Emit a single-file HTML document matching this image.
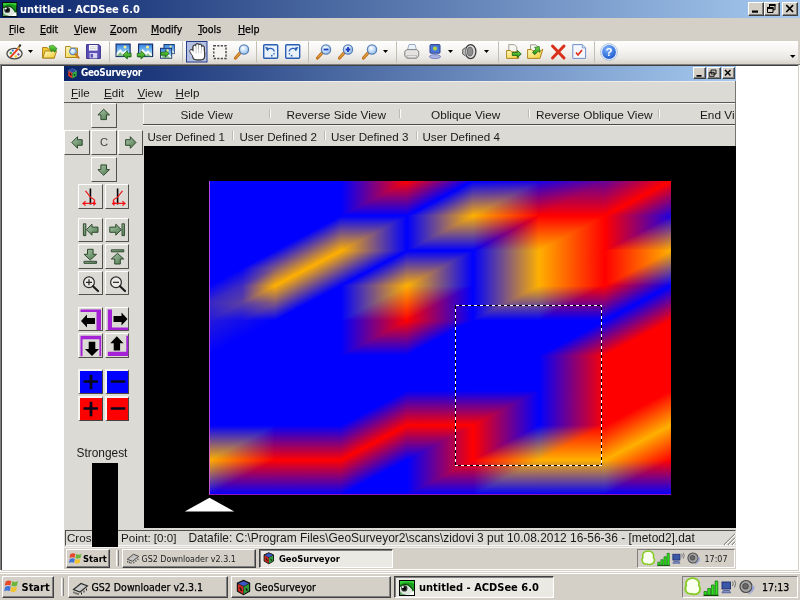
<!DOCTYPE html>
<html><head><meta charset="utf-8"><title>untitled - ACDSee 6.0</title>
<style>
html,body{margin:0;padding:0}
body{width:800px;height:600px;overflow:hidden;position:relative;background:#fff;font-family:"Liberation Sans",sans-serif;font-size:11px;color:#000}
div,span,i,b,u,svg{box-sizing:border-box}
.a,.t,.tb,.ti,.ar,.btn,.cb,.sep,.ic,.tk,.vs,.tray{position:absolute;display:block}
svg{position:absolute;display:block;overflow:visible}
#heat i{position:absolute;display:block;background-blend-mode:screen}
/* Tahoma-like text */
.t{font-family:"DejaVu Sans Condensed","Liberation Sans",sans-serif;font-size:10.5px;line-height:13px;white-space:nowrap;color:#000;-webkit-text-stroke:.25px #000}
.tb{font-family:"DejaVu Sans Condensed","Liberation Sans",sans-serif;font-weight:bold;font-size:10.8px;line-height:13px;white-space:nowrap;color:#000}
/* Arial-like text inside GeoSurveyor */
.ar{font-family:"Liberation Sans",sans-serif;font-size:11.6px;line-height:14px;white-space:nowrap;color:#1a1a1a}
u{text-decoration:underline;text-underline-offset:1px}
.cb{background:#d4d0c8;border:1px solid;border-color:#fff #404040 #404040 #fff;box-shadow:inset -1px -1px 0 #808080}
.btn{background:#dcdad5;border-style:solid;border-width:1px 1.5px 1.5px 1px;border-color:#fff #55524c #55524c #fff}
.sep{width:3px;background:linear-gradient(90deg,#fff 34%,#d4d0c8 34% 67%,#808080 67%)}
.vs{width:2px;height:9px;background:linear-gradient(90deg,#bdbbb5 50%,#fbfbfa 50%)}
.tk{background:#d4d0c8;border:1px solid;border-color:#fff #404040 #404040 #fff;box-shadow:inset -1px -1px 0 #808080}
.tkp{background:#ebe9e4;border-color:#404040 #fff #fff #404040;box-shadow:inset 1px 1px 0 #808080}
.tray{background:#d4d0c8;border:1px solid;border-color:#808080 #fff #fff #808080}
</style></head><body>
<div id="w" style="position:absolute;left:0;top:0;width:800px;height:600px;will-change:transform">
<!-- ===== ACDSee outer window ===== -->
<div class="a" style="left:0;top:0;width:800px;height:18px;background:linear-gradient(90deg,#0a246a,#a6caf0)"></div>
<svg style="left:2px;top:1.500px" width="15.500" height="15" viewBox="0 0 16 16"><defs><g id="eye"><rect width="16" height="16" fill="#050505"/><rect x="1" y="1" width="14" height="14" fill="#1a9c1c"/><path d="M1 1h14v3q-6-3.500-14 0z" fill="#35d036"/><path d="M1 15v-8.500q4.500-3.800 9-1 3.500 2.500 5 7v2.500z" fill="#dfe8df"/><path d="M1 6.500q4.500-3.800 9-1 3.500 2.500 5 7" fill="none" stroke="#064d08" stroke-width="1.300"/><path d="M1 15v-4q2 3.500 6 3.500l-1 .5z" fill="#5da35f"/><circle cx="5.300" cy="8.400" r="3.100" fill="#2b322c"/><circle cx="5.300" cy="8.400" r="1.600" fill="#000"/><circle cx="3.800" cy="7" r="1" fill="#fff"/><path d="M9.500 15l5.500-4.500v4.500z" fill="#fff"/></g></defs><use href="#eye"/></svg>

<span class="tb" style="left:20px;top:3px;color:#fff;font-size:11px">untitled - ACDSee 6.0</span>
<div class="cb" style="left:748px;top:2px;width:15.500px;height:13.500px"></div>
<div class="cb" style="left:764px;top:2px;width:15.500px;height:13.500px"></div>
<div class="cb" style="left:782px;top:2px;width:15.500px;height:13.500px"></div>
<svg style="left:748px;top:2px" width="50" height="14" viewBox="0 0 50 14"><path d="M4 8.500h6v2.200H4z" fill="#000"/><path d="M21.500 2.500h5.500v5.300h-5.500z" fill="none" stroke="#000"/><path d="M21 3h6.500" stroke="#000" stroke-width="2"/><path d="M19.500 5.500h5.500v5h-5.500z" fill="#d4d0c8" stroke="#000"/><path d="M19 6h6.500" stroke="#000" stroke-width="2"/><path d="M38.300 3.200l6.800 6.800M45.100 3.200l-6.800 6.800" stroke="#000" stroke-width="1.700" fill="none"/></svg>
<div class="a" style="left:0;top:18px;width:800px;height:23px;background:#d4d0c8"></div>
<span class="t" style="left:9px;top:23px"><u>F</u>ile</span>
<span class="t" style="left:40px;top:23px"><u>E</u>dit</span>
<span class="t" style="left:74px;top:23px"><u>V</u>iew</span>
<span class="t" style="left:110px;top:23px"><u>Z</u>oom</span>
<span class="t" style="left:151px;top:23px"><u>M</u>odify</span>
<span class="t" style="left:198px;top:23px"><u>T</u>ools</span>
<span class="t" style="left:238px;top:23px"><u>H</u>elp</span>
<div class="a" style="left:0;top:40.500px;width:799px;height:23.500px;border-radius:0 3px 3px 0;background:linear-gradient(#fefefd 0%,#f7f6f3 35%,#eae8e3 75%,#d7d3cb 100%)"></div>
<div class="a" style="left:798px;top:40px;width:2px;height:24px;background:#d4d0c8"></div>
<svg style="left:0;top:40px" width="800" height="24" viewBox="0 0 800 24">
<defs>
<linearGradient id="sky" x1="0" y1="0" x2="0" y2="1"><stop offset="0" stop-color="#2f7fe0"/><stop offset=".6" stop-color="#8cc8f4"/><stop offset="1" stop-color="#e8f6fb"/></linearGradient>
<linearGradient id="fold" x1="0" y1="0" x2="1" y2="1"><stop offset="0" stop-color="#fffbc0"/><stop offset="1" stop-color="#f2cb30"/></linearGradient>
<radialGradient id="lens" cx=".4" cy=".35" r=".7"><stop offset="0" stop-color="#fff"/><stop offset="1" stop-color="#8fc0ee"/></radialGradient>
<linearGradient id="grn" x1="0" y1="0" x2="0" y2="1"><stop offset="0" stop-color="#7be04a"/><stop offset="1" stop-color="#1f8a16"/></linearGradient>
<radialGradient id="hlp" cx=".4" cy=".3" r=".8"><stop offset="0" stop-color="#7db4ff"/><stop offset="1" stop-color="#0d4bc4"/></radialGradient>
<g id="mag"><path d="M1.500 14l5-5.500" stroke="#c2711a" stroke-width="3.200" stroke-linecap="round"/><path d="M1.800 13.700l4.500-5" stroke="#f2b35a" stroke-width="1"/><circle cx="10" cy="5.500" r="4.600" fill="url(#lens)" stroke="#5a7fb5" stroke-width="1.300"/></g>
<g id="pic"><rect x=".6" y=".6" width="14" height="12.400" fill="url(#sky)" stroke="#17306f" stroke-width="1.200"/><path d="M1.200 12.400v-3l3.500-4 3 3.300 2.300-2 4 4.200v1.500z" fill="#f4f8f6"/><path d="M1.200 12.400l3.500-4 3 3.300 2.300-1.600 4 3.300z" fill="#3e9a4a" opacity=".6"/><circle cx="9.500" cy="3.400" r="1.500" fill="#fff28a"/></g>
<path id="dd" d="M0 0h5l-2.500 3z" fill="#000"/>
</defs>
<!-- palette -->
<g transform="translate(7,4)"><ellipse cx="7.500" cy="9.600" rx="7.600" ry="5.300" fill="#f1f0ec" stroke="#4a4a4a" stroke-width="1.300"/><circle cx="3.800" cy="9" r="1.200" fill="#3bb54a"/><circle cx="5.800" cy="6.600" r="1.100" fill="#3c7be0"/><circle cx="8.800" cy="12.400" r="1.200" fill="#f0d020"/><circle cx="11.400" cy="10.400" r="1.100" fill="#7b3a8c"/><path d="M3.500 13.200L11 4.800" stroke="#e8381c" stroke-width="1.800"/><path d="M11 4.800L13.600.4" stroke="#2a2a2a" stroke-width="2"/><path d="M10.600 5.200l1.800-2.600" stroke="#f0b030" stroke-width="1.600"/></g>
<use href="#dd" x="28" y="10"/>
<!-- folder open -->
<g transform="translate(42,5)"><path d="M.6 2.500h4.500l1.200 1.500h6.200v9h-12z" fill="#f0c834" stroke="#a87a10" stroke-width=".9"/><path d="M.8 13l2.300-7h11.500l-2.400 7z" fill="url(#fold)" stroke="#a87a10" stroke-width=".9"/><path d="M7 1.200l4-1.200 4 3.500-2.200 3.700-1.600-1.600-2 1z" fill="url(#grn)" stroke="#1c7a1a" stroke-width=".6"/></g>
<!-- folder search -->
<g transform="translate(65,5)"><path d="M.6 1.500h4.500l1.200 1.500h6.200v9.500h-12z" fill="url(#fold)" stroke="#a87a10" stroke-width=".9"/><circle cx="8" cy="6.500" r="3.300" fill="url(#lens)" stroke="#5a7fb5" stroke-width="1.100"/><path d="M10.400 9l3.300 3.800" stroke="#c77a1e" stroke-width="2" stroke-linecap="round"/></g>
<!-- floppy -->
<g transform="translate(86,4)"><path d="M.6.600h12.300l1.500 1.500v12.300h-13.800z" fill="#5b50b8" stroke="#3a2f8a" stroke-width="1"/><rect x="3" y="1" width="8.600" height="5.600" fill="#fafafa"/><path d="M4 2.800h6.600M4 4.600h6.600" stroke="#c9c9d6" stroke-width=".8"/><rect x="3.600" y="9" width="7.600" height="5.300" fill="#d8d4f0"/><rect x="4.600" y="10" width="2.400" height="3.600" fill="#5b50b8"/></g>
<path d="M109.500 1.500v21" stroke="#c2bfb5"/>
<!-- picture prev / next / multi -->
<g transform="translate(115.500,3.500)"><use href="#pic"/><path d="M7.600 11.400l4.200-4v2.300h3.800v3.600h-3.800v2.300z" fill="url(#grn)" stroke="#145e10" stroke-width=".8"/></g>
<g transform="translate(138,3.500)"><use href="#pic"/><path d="M7.300 11.400l-4.200-4v2.300h-3.800v3.600h3.800v2.300z" fill="url(#grn)" stroke="#145e10" stroke-width=".8"/></g>
<g transform="translate(160,4)"><g transform="translate(3.500,0) scale(.74)"><use href="#pic"/></g><g transform="translate(0,3.800) scale(.8)"><use href="#pic"/></g><path d="M9 9.700l-3.600-3.600v2.100h-4.600v3h4.600v2.100z" fill="url(#grn)" stroke="#145e10" stroke-width=".8"/></g>
<path d="M182.500 1.500v21" stroke="#c2bfb5"/>
<!-- hand (selected) -->
<rect x="186.500" y="1.500" width="20.500" height="20.500" fill="#b4c0e1" stroke="#233c8c" stroke-width="1"/>
<defs><g id="hnd"><rect x="193.300" y="9.500" width="10.700" height="9.800" rx="3.200"/><rect x="193.600" y="5.800" width="2.300" height="8" rx="1.100"/><rect x="196.200" y="4.300" width="2.300" height="9" rx="1.100"/><rect x="198.800" y="4.800" width="2.300" height="9" rx="1.100"/><rect x="201.400" y="6.500" width="2.300" height="8" rx="1.100"/><path d="M191.300 11.200l3.200 4.800" stroke-width="2.400" stroke-linecap="round"/></g></defs>
<g stroke="#3a3a3a" fill="#3a3a3a"><rect x="192.500" y="8.700" width="12.300" height="11.400" rx="3.800"/><rect x="192.800" y="5" width="3.900" height="9" rx="1.900"/><rect x="195.400" y="3.500" width="3.900" height="10" rx="1.900"/><rect x="198" y="4" width="3.900" height="10" rx="1.900"/><rect x="200.600" y="5.700" width="3.900" height="9" rx="1.900"/><path d="M191.300 11.200l3.200 4.800" stroke-width="4" stroke-linecap="round"/></g><use href="#hnd" fill="#fff" stroke="#fff" stroke-width="0"/>
<path d="M196 10v3.500M198.600 9.500v4M201.200 10v3.500" stroke="#b8b8b8" stroke-width=".7"/>
<!-- select -->
<rect x="213.800" y="5.800" width="12.200" height="12.700" fill="#f6f5f2" stroke="#444" stroke-width="1.400" stroke-dasharray="2.100 1.400"/>
<!-- zoom tool -->
<use href="#mag" x="234" y="4"/>
<path d="M256.500 1.500v21" stroke="#c2bfb5"/>
<!-- rotate left / right -->
<g transform="translate(263,4)"><rect x=".7" y=".7" width="14" height="13.600" rx="1" fill="#e9f1fb" stroke="#2b5fb4" stroke-width="1.400"/><path d="M4.300 6.200a3.800 3.800 0 1 1 1 5" fill="none" stroke="#2b5fb4" stroke-width="1.300" stroke-dasharray="9 1.500 1.500 1.500 1.500 9"/><path d="M2.600 3.400l2.600.6-.6 2.800z" fill="#2b5fb4" stroke="#2b5fb4" stroke-width=".8"/></g>
<g transform="translate(285,4)"><rect x=".7" y=".7" width="14" height="13.600" rx="1" fill="#e9f1fb" stroke="#2b5fb4" stroke-width="1.400"/><path d="M11.100 6.200a3.800 3.800 0 1 0-1 5" fill="none" stroke="#2b5fb4" stroke-width="1.300" stroke-dasharray="9 1.500 1.500 1.500 1.500 9"/><path d="M12.800 3.400l-2.600.6.600 2.800z" fill="#2b5fb4" stroke="#2b5fb4" stroke-width=".8"/></g>
<path d="M308.500 1.500v21" stroke="#c2bfb5"/>
<!-- zoom out / in / zoom -->
<use href="#mag" x="316" y="4"/><path d="M323.600 9.500h4.800" stroke="#1c3cc0" stroke-width="1.800"/>
<use href="#mag" x="338" y="4"/><path d="M345.600 9.500h4.800M348 7.100v4.800" stroke="#1c3cc0" stroke-width="1.800"/>
<use href="#mag" x="362" y="4"/>
<use href="#dd" x="383" y="10"/>
<path d="M396.500 1.500v21" stroke="#c2bfb5"/>
<!-- printer -->
<g transform="translate(404,4)"><path d="M3.500 6l1.500-5.500h6l1.500 5.500z" fill="#eaf2fa" stroke="#8a9cb8" stroke-width=".8"/><path d="M.8 7.200l2.200-1.600h9.500l2.200 1.600v4.800l-2 2.200h-9.900l-2-2.200z" fill="#e4e3e0" stroke="#77777c" stroke-width=".9"/><path d="M2.500 11.800h10.500l-1.500 2h-7.500z" fill="#fafafa" stroke="#8a8a8a" stroke-width=".6"/></g>
<!-- wallpaper / computer -->
<g transform="translate(429,4)"><rect x="1" y=".6" width="10" height="8.600" rx="1" fill="#4b78d8" stroke="#2a3f8c" stroke-width="1"/><circle cx="6" cy="4.500" r="2" fill="#b6d83a"/><path d="M4.500 9.500h3v2h-3z" fill="#8c96c8"/><ellipse cx="6" cy="12.600" rx="5.600" ry="2" fill="#a9b4e4" stroke="#6a76b4" stroke-width=".8"/></g>
<use href="#dd" x="448" y="10"/>
<!-- sound -->
<g transform="translate(462,4)"><ellipse cx="8.600" cy="7.600" rx="5.300" ry="7" fill="#d9d9d9" stroke="#3c3c3c" stroke-width="1.300"/><ellipse cx="8" cy="7.600" rx="2.800" ry="4.300" fill="#8d8d8d" stroke="#555" stroke-width=".8"/><path d="M3.500 3.500l-2.800 2v4.500l2.800 2" fill="#bdbdbd" stroke="#4a4a4a" stroke-width=".9"/></g>
<use href="#dd" x="484" y="10"/>
<path d="M498.500 1.500v21" stroke="#c2bfb5"/>
<!-- move to / copy to -->
<g transform="translate(506,4)"><path d="M2.800.6h5.500l2.500 2.500v6h-8z" fill="#f7f7f2" stroke="#8a8a7a" stroke-width=".8"/><path d="M.6 6.500h4l1 1.300h7v6.600h-12z" fill="url(#fold)" stroke="#a87a10" stroke-width=".9"/><path d="M15.300 10l-4-3.600v2.100h-5v3h5v2.100z" fill="url(#grn)" stroke="#145e10" stroke-width=".8"/></g>
<g transform="translate(527,4)"><path d="M3.500.8h5.500l2 2.200v5h-7.500z" fill="#f7f7f2" stroke="#8a8a7a" stroke-width=".8"/><path d="M.6 5.500h4l1 1.300h8l2.300-1.600-3 9.200h-12.300z" fill="url(#fold)" stroke="#a87a10" stroke-width=".9"/><path d="M12.200 2.500l-4.600 1 1.500 1.400-3.600 3.600 2.300 2.200 3.600-3.600 1.500 1.400z" fill="url(#grn)" stroke="#145e10" stroke-width=".7"/></g>
<!-- delete X -->
<path d="M552.500 6l11.500 12M564 6l-11.500 12" stroke="#d8301a" stroke-width="3" stroke-linecap="round"/>
<!-- properties doc -->
<g transform="translate(572,4)"><path d="M.8.600h9.500l3.300 3.300v10.500h-12.800z" fill="#f4f8fd" stroke="#6f8fc4" stroke-width="1"/><path d="M10.300.6v3.300h3.300" fill="#cfe0f6" stroke="#6f8fc4" stroke-width=".8"/><path d="M4 8.500l2 2.500 4-5" fill="none" stroke="#e0301a" stroke-width="1.700"/></g>
<path d="M594.500 1.500v21" stroke="#c2bfb5"/>
<!-- help -->
<circle cx="609" cy="12" r="7.600" fill="url(#hlp)" stroke="#e8f0fc" stroke-width="1.400"/><circle cx="609" cy="12" r="8.400" fill="none" stroke="#9ab0d8" stroke-width=".7"/>
<text x="609" y="16.200" text-anchor="middle" font-family="Liberation Sans,sans-serif" font-weight="bold" font-size="11.500" fill="#fff">?</text>
<path d="M790 15h5.500l-2.750 3z" fill="#000"/>
</svg>

<div class="a" style="left:0;top:64px;width:800px;height:1px;background:#808080"></div>
<div class="a" style="left:1px;top:65px;width:798px;height:1px;background:#404040"></div>
<div class="a" style="left:0;top:64px;width:1px;height:506px;background:#808080"></div>
<div class="a" style="left:1px;top:65px;width:1px;height:505px;background:#404040"></div>
<div class="a" style="left:798px;top:65px;width:1px;height:506px;background:#d4d0c8"></div>
<div class="a" style="left:1px;top:570px;width:798px;height:1px;background:#d4d0c8"></div>
<!-- ===== GeoSurveyor screenshot shown inside ACDSee ===== -->
<div class="a" style="left:64px;top:66px;width:672px;height:503px;background:#d9d6cf"></div>
<!-- title bar -->
<div class="a" style="left:64px;top:66px;width:672px;height:15px;background:linear-gradient(90deg,#0a246a,#a6caf0)"></div>
<svg style="left:66.500px;top:66.800px" width="11" height="13" viewBox="0 0 13 14"><path d="M1.500 3.800L6.500 6.200v6.600L1.500 10z" fill="#d8392c"/><path d="M11.500 3.800L6.500 6.200v6.600l5-2.800z" fill="#2fb03a"/><path d="M6.500 1.200l5 2.400-5 2.400-5-2.400z" fill="#2c4596" stroke="#8fa6dc" stroke-width=".7" stroke-dasharray="1.200 1"/><path d="M3.500 6.500l1.500 3M8.500 7.500l1 2" stroke="#111" stroke-width="1.200"/></svg>
<span class="tb" style="left:81px;top:67.100px;color:#fff;font-size:9.900px;line-height:12px;letter-spacing:-.35px">GeoSurveyor</span>
<div class="cb" style="left:693px;top:66.700px;width:13.300px;height:12.200px"></div>
<div class="cb" style="left:707px;top:66.700px;width:13.500px;height:12.200px"></div>
<div class="cb" style="left:721.700px;top:66.700px;width:13.300px;height:12.200px"></div>
<svg style="left:693px;top:66.700px" width="42" height="12" viewBox="0 0 42 12"><path d="M3.500 8h5v1.700h-5z" fill="#000"/><path d="M18 3h5v4h-5zM16.200 5.300h5v4h-5z" fill="#d4d0c8" stroke="#000" stroke-width=".9"/><path d="M32 3l5.500 5.600M37.500 3L32 8.600" stroke="#000" stroke-width="1.400" fill="none"/></svg>
<!-- menu bar -->
<div class="a" style="left:64px;top:81px;width:672px;height:22px;background:#dcdad5;border-top:1px solid #efeeeb"></div>
<span class="ar" style="left:71px;top:85.500px"><u>F</u>ile</span>
<span class="ar" style="left:104px;top:85.500px"><u>E</u>dit</span>
<span class="ar" style="left:137.5px;top:85.500px"><u>V</u>iew</span>
<span class="ar" style="left:175.5px;top:85.500px"><u>H</u>elp</span>
<div class="a" style="left:64px;top:102px;width:672px;height:1px;background:#5a5955"></div>
<!-- left tool panel + tab strips background -->
<div class="a" style="left:64px;top:103px;width:672px;height:427px;background:#dcdad5"></div>
<div class="a" style="left:143px;top:103px;width:593px;height:1px;background:#f7f6f4"></div>
<div class="a" style="left:143px;top:103px;width:1px;height:21px;background:#f7f6f4"></div>
<div class="a" style="left:143px;top:124px;width:593px;height:1px;background:#4b4a47"></div>
<div class="a" style="left:143px;top:125px;width:593px;height:1px;background:#f3f2ef"></div>
<div class="a" style="left:735px;top:81px;width:1px;height:65px;background:#77756f"></div>
<span class="ar" style="left:180.500px;top:108px;font-size:11.800px">Side View</span>
<span class="ar" style="left:286.500px;top:108px;font-size:11.800px">Reverse Side View</span>
<span class="ar" style="left:431px;top:108px;font-size:11.800px">Oblique View</span>
<span class="ar" style="left:536px;top:108px;font-size:11.800px">Reverse Oblique View</span>
<span class="ar" style="left:700px;top:108px;width:35px;overflow:hidden;font-size:11.800px">End View</span>
<i class="vs" style="left:269px;top:108.500px"></i><i class="vs" style="left:399px;top:108.500px"></i><i class="vs" style="left:528px;top:108.500px"></i><i class="vs" style="left:657.500px;top:108.500px"></i>
<span class="ar" style="left:147.500px;top:130px">User Defined 1</span>
<span class="ar" style="left:239.500px;top:130px">User Defined 2</span>
<span class="ar" style="left:331px;top:130px">User Defined 3</span>
<span class="ar" style="left:422.500px;top:130px">User Defined 4</span>
<i class="vs" style="left:232px;top:130.500px"></i><i class="vs" style="left:324px;top:130.500px"></i><i class="vs" style="left:415.500px;top:130.500px"></i>
<!-- 3D view (black) -->
<div class="a" style="left:143.500px;top:145.800px;width:592px;height:382.700px;background:#000"></div>
<svg width="0" height="0" style="left:0;top:0"><defs><linearGradient id="gg" x1="0" y1="0" x2="1" y2="1"><stop offset="0" stop-color="#a9c4a9"/><stop offset="1" stop-color="#4d7a4d"/></linearGradient></defs></svg>
<div class="btn" style="left:91.2px;top:103px;width:25.6px;height:25.2px"></div>
<div class="btn" style="left:64.2px;top:130px;width:25.4px;height:25.2px"></div>
<div class="btn" style="left:90.6px;top:130px;width:26.2px;height:25.2px"></div>
<div class="btn" style="left:117.8px;top:130px;width:25.2px;height:25.2px"></div>
<div class="btn" style="left:91.2px;top:156.8px;width:25.6px;height:25.2px"></div>
<svg style="left:91px;top:103px" width="26" height="26" viewBox="0 0 26 26"><path d="M12.700 6.200l5.800 5.700h-3v4.700h-5.600v-4.700h-3z" fill="url(#gg)" stroke="#2f4a2f" stroke-width="1" stroke-linejoin="round"/></svg>
<svg style="left:91px;top:155.8px" width="26" height="26" viewBox="0 0 26 26"><path d="M12.700 19.300l5.800-5.700h-3v-4.700h-5.600v4.700h-3z" fill="url(#gg)" stroke="#2f4a2f" stroke-width="1" stroke-linejoin="round"/></svg>
<svg style="left:64.8px;top:130px" width="26" height="26" viewBox="0 0 26 26"><path d="M6.800 12.500l5.700-5.800v3h4.700v5.600h-4.700v3z" fill="url(#gg)" stroke="#2f4a2f" stroke-width="1" stroke-linejoin="round"/></svg>
<svg style="left:117px;top:130px" width="26" height="26" viewBox="0 0 26 26"><path d="M19 12.500l-5.700-5.800v3h-4.700v5.600h4.700v3z" fill="url(#gg)" stroke="#2f4a2f" stroke-width="1" stroke-linejoin="round"/></svg>
<span class="ar" style="left:100px;top:135.300px;font-size:11.200px;color:#444">C</span>
<div class="btn" style="left:78px;top:183.8px;width:24.7px;height:24.8px"></div>
<div class="btn" style="left:104.7px;top:183.8px;width:24.7px;height:24.8px"></div>
<div class="btn" style="left:78px;top:217.7px;width:24.7px;height:24.8px"></div>
<div class="btn" style="left:104.7px;top:217.7px;width:24.7px;height:24.8px"></div>
<div class="btn" style="left:78px;top:244.2px;width:24.7px;height:24.8px"></div>
<div class="btn" style="left:104.7px;top:244.2px;width:24.7px;height:24.8px"></div>
<div class="btn" style="left:78px;top:270.7px;width:24.7px;height:24.8px"></div>
<div class="btn" style="left:104.7px;top:270.7px;width:24.7px;height:24.8px"></div>
<div class="btn" style="left:78px;top:306.5px;width:24.7px;height:24.8px"></div>
<div class="btn" style="left:104.7px;top:306.5px;width:24.7px;height:24.8px"></div>
<div class="btn" style="left:78px;top:333.2px;width:24.7px;height:24.8px"></div>
<div class="btn" style="left:104.7px;top:333.2px;width:24.7px;height:24.8px"></div>
<svg style="left:78px;top:183.8px" width="25" height="25" viewBox="0 0 25 25"><path d="M12.400 4.500v16" stroke="#000" stroke-width="1.600"/><path d="M7.500 6.800l5.500 7q4.300 1.600 3.600 3.800-.8 2.200-4.600 1.800M5 19.400h12.400M7.600 17.300l-2.600 2.100 2.600 2.200M15.400 17.600l2 1.800-2 1.800" fill="none" stroke="#f01414" stroke-width="1.200"/></svg>
<svg style="left:104.7px;top:183.8px" width="25" height="25" viewBox="0 0 25 25"><path d="M12.600 4.500v16" stroke="#000" stroke-width="1.600"/><path d="M17.500 6.800l-5.500 7q-4.300 1.600-3.600 3.800.8 2.200 4.600 1.800M20 19.400h-12.400M17.400 17.300l2.600 2.100-2.600 2.200M9.600 17.600l-2 1.800 2 1.800" fill="none" stroke="#f01414" stroke-width="1.200"/></svg>
<svg style="left:78px;top:217.7px" width="25" height="25" viewBox="0 0 25 25"><path d="M5.400 5.800h2.400v11.800h-2.400z" fill="url(#gg)" stroke="#2f4a2f" stroke-width="1" stroke-linejoin="round"/><path d="M8.400 11.700l5.600-5.500v2.900h6v5.200h-6v2.900z" fill="url(#gg)" stroke="#2f4a2f" stroke-width="1" stroke-linejoin="round"/></svg>
<svg style="left:104.7px;top:217.7px" width="25" height="25" viewBox="0 0 25 25"><path d="M17 5.800h2.400v11.800h-2.400z" fill="url(#gg)" stroke="#2f4a2f" stroke-width="1" stroke-linejoin="round"/><path d="M16.400 11.700l-5.600-5.500v2.900h-6v5.200h6v2.900z" fill="url(#gg)" stroke="#2f4a2f" stroke-width="1" stroke-linejoin="round"/></svg>
<svg style="left:78px;top:244.2px" width="25" height="25" viewBox="0 0 25 25"><path d="M6 17.300h12.500v2h-12.500z" fill="url(#gg)" stroke="#2f4a2f" stroke-width="1" stroke-linejoin="round"/><path d="M12.300 16l-6.200-5.700h3.400v-5h5.600v5h3.400z" fill="url(#gg)" stroke="#2f4a2f" stroke-width="1" stroke-linejoin="round"/></svg>
<svg style="left:104.7px;top:244.2px" width="25" height="25" viewBox="0 0 25 25"><path d="M6.300 5.800h12.500v2h-12.500z" fill="url(#gg)" stroke="#2f4a2f" stroke-width="1" stroke-linejoin="round"/><path d="M12.500 9.300l6.200 5.700h-3.400v5h-5.600v-5h-3.400z" fill="url(#gg)" stroke="#2f4a2f" stroke-width="1" stroke-linejoin="round"/></svg>
<svg style="left:78px;top:270.7px" width="25" height="25" viewBox="0 0 25 25"><circle cx="11" cy="11.300" r="5.400" fill="#ecebe8" stroke="#2b2b2b" stroke-width="1.200"/><path d="M15 15.300l5 4.700" stroke="#1d1d1d" stroke-width="2.200" stroke-linecap="round"/><path d="M8 11.300h6M11 8.300v6" stroke="#222" stroke-width="1.200"/></svg>
<svg style="left:104.7px;top:270.7px" width="25" height="25" viewBox="0 0 25 25"><circle cx="11" cy="11.300" r="5.400" fill="#ecebe8" stroke="#2b2b2b" stroke-width="1.200"/><path d="M15 15.300l5 4.700" stroke="#1d1d1d" stroke-width="2.200" stroke-linecap="round"/><path d="M8 11.300h6" stroke="#222" stroke-width="1.200"/></svg>
<svg style="left:78px;top:306.5px" width="25" height="25" viewBox="0 0 25 25"><path d="M2.500 2.500h20.500v20.500h-4.500v-18h-16z" fill="#a421d6"/><path d="M3 14l6-6.500v3.500h8v6h-8v3.500z" fill="#000"/></svg>
<svg style="left:104.7px;top:306.5px" width="25" height="25" viewBox="0 0 25 25"><path d="M2.800 2.500h4.200v18h16v2.500h-20.200z" fill="#a421d6"/><path d="M22.500 12l-6-6.500v3.500h-8v6h8v3.500z" fill="#000"/></svg>
<svg style="left:78px;top:333.2px" width="25" height="25" viewBox="0 0 25 25"><path d="M2.500 2.800h20.700v20.500h-1.800v-17h-16.900v17h-2z" fill="#a421d6"/><path d="M14 23l-7-7h3.700v-7.200h6.600v7.200h3.700z" fill="#000"/></svg>
<svg style="left:104.7px;top:333.2px" width="25" height="25" viewBox="0 0 25 25"><path d="M21.300 2.800h2v20.200h-20.500v-4.200h18.500z" fill="#a421d6"/><path d="M11.800 3.300l-6.500 7h3.400v7.200h6.400v-7.200h3.400z" fill="#000"/></svg>
<div class="a" style="left:78px;top:368.7px;width:24.700px;height:25px;background:#0000fe;border-style:solid;border-width:2.300px 1.200px 1.500px 2px;border-color:#f4f3f0 #45443f #45443f #f4f3f0"></div>
<svg style="left:78px;top:368.7px" width="25" height="25" viewBox="0 0 25 25"><path d="M5.5 12.500h14.500" stroke="#08081c" stroke-width="2.500"/><path d="M13 5.800v14.500" stroke="#08081c" stroke-width="2.700"/></svg>
<div class="a" style="left:104.7px;top:368.7px;width:24.700px;height:25px;background:#0000fe;border-style:solid;border-width:2.300px 1.200px 1.500px 2px;border-color:#f4f3f0 #45443f #45443f #f4f3f0"></div>
<svg style="left:104.7px;top:368.7px" width="25" height="25" viewBox="0 0 25 25"><path d="M5.8 12.500h14.500" stroke="#08081c" stroke-width="2.500"/></svg>
<div class="a" style="left:78px;top:395.5px;width:24.700px;height:25px;background:#fe0000;border-style:solid;border-width:2.300px 1.200px 1.500px 2px;border-color:#f4f3f0 #45443f #45443f #f4f3f0"></div>
<svg style="left:78px;top:395.5px" width="25" height="25" viewBox="0 0 25 25"><path d="M5.5 12.500h14.500" stroke="#08081c" stroke-width="2.500"/><path d="M13 5.800v14.500" stroke="#08081c" stroke-width="2.700"/></svg>
<div class="a" style="left:104.7px;top:395.5px;width:24.700px;height:25px;background:#fe0000;border-style:solid;border-width:2.300px 1.200px 1.500px 2px;border-color:#f4f3f0 #45443f #45443f #f4f3f0"></div>
<svg style="left:104.7px;top:395.5px" width="25" height="25" viewBox="0 0 25 25"><path d="M5.8 12.500h14.500" stroke="#08081c" stroke-width="2.500"/></svg>

<!-- status bar -->
<div class="a" style="left:64px;top:529px;width:672px;height:18px;background:#dcdad5"></div>
<div class="a" style="left:65px;top:529.800px;width:671px;height:16px;border:1px solid;border-color:#4f4e4b transparent #f7f6f4 #4f4e4b"></div>
<span class="ar" style="left:67px;top:530.500px">Crosshair</span>
<span class="ar" style="left:121px;top:530.500px">Point: [0:0]</span>
<span class="ar" id="dfile" style="left:188.500px;top:530.500px;font-size:11.950px">Datafile: C:\Program Files\GeoSurveyor2\scans\zidovi 3 put 10.08.2012 16-56-36 - [metod2].dat</span>
<svg style="left:724px;top:533px" width="12" height="13" viewBox="0 0 12 13"><path d="M11 1L0 12M11 5L4 12M11 9L8 12" stroke="#8f8d87" stroke-width="1.200"/><path d="M12 1L1 12M12 5L5 12M12 9L9 12" stroke="#fff" stroke-width="1"/></svg>
<!-- strongest -->
<span class="ar" style="left:76.500px;top:445.500px;font-size:11.900px">Strongest</span>
<div class="a" style="left:91.500px;top:463px;width:26.500px;height:83.500px;background:#000"></div>
<!-- inner taskbar -->
<div class="a" style="left:64px;top:546.500px;width:672px;height:22.500px;background:#d4d0c8;border-top:1px solid #f4f3f0"></div>
<div class="tk" style="left:66px;top:549px;width:44px;height:18.500px"></div>
<svg style="left:69px;top:551px" width="14" height="14" viewBox="0 0 16 16"><path d="M1.500 3.500q3-1.800 5.800-.3l-1 4.600q-2.800-1.500-5.800.3z" fill="#e5492c"/><path d="M8.300 3.400q3 1.600 5.900-.2l-1 4.600q-2.900 1.800-5.900.2z" fill="#6fb53a"/><path d="M.9 9.200q3-1.800 5.800-.3l-1 4.600q-2.800-1.500-5.800.3z" fill="#3f74d8"/><path d="M7.300 9.100q3 1.600 5.900-.2l-1 4.600q-2.900 1.800-5.900.2z" fill="#f1c22e"/></svg>
<span class="tb" style="left:83px;top:553.200px;font-size:9.300px;line-height:12px">Start</span>
<i class="sep" style="left:116px;top:550px;height:16px"></i>
<div class="tk" style="left:122px;top:549px;width:134px;height:18.500px"></div>
<svg style="left:126px;top:552px" width="14" height="12" viewBox="0 0 17 14"><path d="M1.500 8.500L9 2.500l6.500 2.500L8 11z" fill="#c4c4c4" stroke="#333" stroke-width="1"/><path d="M2 10.500v2M4 11.300v2M6 12v2M9.500 11.500v2M12 9.500v2M14.500 7.500v2" stroke="#222" stroke-width="1"/></svg>
<span class="t" style="left:141.500px;top:553.200px;font-size:8.900px;line-height:12px;-webkit-text-stroke:0;color:#1c1c1c">GS2 Downloader v2.3.1</span>
<div class="tk tkp" style="left:259px;top:549px;width:133.500px;height:18.500px"></div>
<svg style="left:263.300px;top:552px" width="11.600" height="12.500" viewBox="0 0 13 14"><path d="M6.500.8l5.300 2.400v7L6.500 13.200 1.200 10.200v-7z" fill="#222" stroke="#111" stroke-width="1"/><path d="M1.700 4L6.300 6.300v6.300L1.700 9.900z" fill="#d22a1e"/><path d="M11.300 4L6.700 6.300v6.300l4.600-2.700z" fill="#2f9a3a"/><path d="M6.500 1.500l4.500 2.100-4.500 2.200-4.500-2.200z" fill="#3b55c8"/><path d="M3.300 6.800l1.600 3.200M8.600 7.800l1.200 2" stroke="#111" stroke-width="1.100"/></svg>
<span class="tb" style="left:279px;top:553.200px;font-size:9.300px;line-height:12px">GeoSurveyor</span>
<div class="tray" style="left:637px;top:549px;width:97.500px;height:18.500px"></div>
<svg style="left:640.500px;top:550px" width="62" height="16.800" viewBox="0 0 74 20"><use href="#trayic"/></svg>

<span class="t" style="left:704.500px;top:553.200px;font-size:8.900px;line-height:12px;-webkit-text-stroke:0;color:#1c1c1c">17:07</span>

<div id="heat">
<i style="left:209px;top:181px;width:67px;height:35px;background:rgb(0,0,255)"></i>
<i style="left:275px;top:181px;width:67px;height:35px;background:rgb(0,0,255)"></i>
<i style="left:341px;top:181px;width:67px;height:35px;background:linear-gradient(0.00deg,rgb(0,0,0) 0.32%,rgb(255,0,0) 100.00%),linear-gradient(180.00deg,rgb(0,0,0) 0.00%,rgb(0,0,255) 99.68%)"></i>
<i style="left:341px;top:181px;width:67px;height:35px;background:linear-gradient(90.00deg,rgb(0,0,0) -0.00%,rgb(255,0,0) 98.51%),linear-gradient(-90.00deg,rgb(0,0,0) 1.49%,rgb(0,0,255) 100.00%);clip-path:polygon(0 0,67.00px 0,67.00px -0.53px,0 34.89px)"></i>
<i style="left:407px;top:181px;width:67px;height:35px;background:linear-gradient(152.14deg,rgb(0,0,0) 49.55%,rgb(255,0,0) 99.09%),linear-gradient(152.14deg,rgb(0,0,0) 49.55%,rgb(0,176,0) 99.09%),linear-gradient(-27.86deg,rgb(0,0,0) 0.91%,rgb(0,0,255) 50.45%)"></i>
<i style="left:407px;top:181px;width:67px;height:35px;background:linear-gradient(-27.86deg,rgb(0,0,0) 50.45%,rgb(255,0,0) 100.00%),linear-gradient(152.14deg,rgb(0,0,0) 0.00%,rgb(0,0,255) 49.55%);clip-path:polygon(0 0,67.00px 0,67.00px -0.53px,0 34.89px)"></i>
<i style="left:473px;top:181px;width:67px;height:35px;background:linear-gradient(180.00deg,rgb(26,0,0) 0.00%,rgb(255,0,0) 99.68%),linear-gradient(-90.00deg,rgb(0,0,0) 1.49%,rgb(0,176,0) 100.00%),linear-gradient(0.00deg,rgb(0,0,0) 0.32%,rgb(0,0,230) 100.00%)"></i>
<i style="left:473px;top:181px;width:67px;height:35px;background:linear-gradient(176.91deg,rgb(0,0,0) 0.00%,rgb(255,0,0) 90.36%),linear-gradient(180.00deg,rgb(0,0,0) 0.00%,rgb(0,176,0) 99.68%),linear-gradient(-2.97deg,rgb(0,0,0) 9.31%,rgb(0,0,255) 100.00%);clip-path:polygon(0 0,67.00px 0,67.00px -0.53px,0 34.89px)"></i>
<i style="left:539px;top:181px;width:67px;height:35px;background:linear-gradient(180.00deg,rgb(102,0,0) 0.00%,rgb(255,0,0) 99.68%),linear-gradient(0.00deg,rgb(0,0,0) 0.32%,rgb(0,0,153) 100.00%)"></i>
<i style="left:539px;top:181px;width:67px;height:35px;background:linear-gradient(170.05deg,rgb(26,0,0) 0.00%,rgb(255,0,0) 74.62%),linear-gradient(-10.04deg,rgb(0,0,0) 25.54%,rgb(0,0,230) 100.00%);clip-path:polygon(0 0,67.00px 0,67.00px -0.53px,0 34.89px)"></i>
<i style="left:605px;top:181px;width:66px;height:35px;background:linear-gradient(-27.86deg,rgb(31,0,0) 0.16%,rgb(255,0,0) 50.08%),linear-gradient(152.14deg,rgb(0,0,0) 49.92%,rgb(0,0,224) 99.84%)"></i>
<i style="left:605px;top:181px;width:66px;height:35px;background:linear-gradient(152.14deg,rgb(102,0,0) 0.00%,rgb(255,0,0) 49.92%),linear-gradient(-27.86deg,rgb(0,0,0) 50.08%,rgb(0,0,153) 100.00%);clip-path:polygon(0 0,66.00px 0,66.00px 0.00px,0 34.89px)"></i>
<i style="left:209px;top:215px;width:67px;height:36px;background:rgb(0,0,255)"></i>
<i style="left:275px;top:215px;width:67px;height:36px;background:linear-gradient(152.14deg,rgb(0,0,0) 50.10%,rgb(255,0,0) 98.95%),linear-gradient(152.14deg,rgb(0,0,0) 50.10%,rgb(0,176,0) 98.95%),linear-gradient(-27.86deg,rgb(0,0,0) 1.05%,rgb(0,0,255) 49.90%)"></i>
<i style="left:275px;top:215px;width:67px;height:36px;background:rgb(0,0,255);clip-path:polygon(0 0,67.00px 0,67.00px 0.36px,0 35.78px)"></i>
<i style="left:341px;top:215px;width:67px;height:36px;background:linear-gradient(-90.00deg,rgb(0,0,0) 1.49%,rgb(255,0,0) 100.00%),linear-gradient(-90.00deg,rgb(0,0,0) 1.49%,rgb(0,176,0) 100.00%),linear-gradient(90.00deg,rgb(0,0,0) -0.00%,rgb(0,0,255) 98.51%)"></i>
<i style="left:341px;top:215px;width:67px;height:36px;background:linear-gradient(180.00deg,rgb(0,0,0) 2.47%,rgb(255,0,0) 99.38%),linear-gradient(180.00deg,rgb(0,0,0) 2.47%,rgb(0,176,0) 99.38%),linear-gradient(0.00deg,rgb(0,0,0) 0.62%,rgb(0,0,255) 97.53%);clip-path:polygon(0 0,67.00px 0,67.00px 0.36px,0 35.78px)"></i>
<i style="left:407px;top:215px;width:67px;height:36px;background:linear-gradient(0.00deg,rgb(0,0,0) 0.62%,rgb(255,0,0) 97.53%),linear-gradient(0.00deg,rgb(0,0,0) 0.62%,rgb(0,176,0) 97.53%),linear-gradient(180.00deg,rgb(0,0,0) 2.47%,rgb(0,0,255) 99.38%)"></i>
<i style="left:407px;top:215px;width:67px;height:36px;background:linear-gradient(90.00deg,rgb(0,0,0) -0.00%,rgb(255,0,0) 98.51%),linear-gradient(90.00deg,rgb(0,0,0) 0.00%,rgb(0,176,0) 98.51%),linear-gradient(-90.00deg,rgb(0,0,0) 1.49%,rgb(0,0,255) 100.00%);clip-path:polygon(0 0,67.00px 0,67.00px 0.36px,0 35.78px)"></i>
<i style="left:473px;top:215px;width:67px;height:36px;background:linear-gradient(90.00deg,rgb(0,0,0) -0.00%,rgb(255,0,0) 98.51%),linear-gradient(152.14deg,rgb(0,0,0) 50.10%,rgb(0,176,0) 98.95%),linear-gradient(-90.00deg,rgb(0,0,0) 1.49%,rgb(0,0,255) 100.00%)"></i>
<i style="left:473px;top:215px;width:67px;height:36px;background:linear-gradient(0.00deg,rgb(0,0,0) 0.62%,rgb(255,0,0) 97.53%),linear-gradient(-27.86deg,rgb(0,0,0) 49.90%,rgb(0,176,0) 98.76%),linear-gradient(180.00deg,rgb(0,0,0) 2.47%,rgb(0,0,255) 99.38%);clip-path:polygon(0 0,67.00px 0,67.00px 0.36px,0 35.78px)"></i>
<i style="left:539px;top:215px;width:67px;height:36px;background:linear-gradient(rgb(255,0,0),rgb(255,0,0)),linear-gradient(-90.00deg,rgb(0,0,0) 1.49%,rgb(0,176,0) 100.00%)"></i>
<i style="left:539px;top:215px;width:67px;height:36px;background:linear-gradient(rgb(255,0,0),rgb(255,0,0)),linear-gradient(180.00deg,rgb(0,0,0) 2.47%,rgb(0,176,0) 99.38%);clip-path:polygon(0 0,67.00px 0,67.00px 0.36px,0 35.78px)"></i>
<i style="left:605px;top:215px;width:66px;height:36px;background:linear-gradient(180.00deg,rgb(31,0,0) 2.47%,rgb(255,0,0) 99.38%),linear-gradient(152.14deg,rgb(0,0,0) 50.47%,rgb(0,176,0) 99.69%),linear-gradient(0.00deg,rgb(0,0,0) 0.62%,rgb(0,0,224) 97.53%)"></i>
<i style="left:605px;top:215px;width:66px;height:36px;background:linear-gradient(-90.00deg,rgb(31,0,0) 0.00%,rgb(255,0,0) 100.00%),linear-gradient(90.00deg,rgb(0,0,0) 0.00%,rgb(0,0,224) 100.00%);clip-path:polygon(0 0,66.00px 0,66.00px 0.89px,0 35.78px)"></i>
<i style="left:209px;top:250px;width:34px;height:19px;background:rgb(0,0,255)"></i>
<i style="left:242px;top:250px;width:34px;height:19px;background:linear-gradient(152.14deg,rgb(0,0,0) 49.29%,rgb(128,0,0) 96.47%),linear-gradient(152.14deg,rgb(0,0,0) 49.29%,rgb(0,88,0) 96.47%),linear-gradient(-27.86deg,rgb(0,0,128) 3.53%,rgb(0,0,255) 50.71%)"></i>
<i style="left:242px;top:250px;width:34px;height:19px;background:rgb(0,0,255);clip-path:polygon(0 0,34.00px 0,34.00px 0.25px,0 18.22px)"></i>
<i style="left:209px;top:268px;width:34px;height:18px;background:linear-gradient(152.14deg,rgb(0,0,0) 49.11%,rgb(64,0,0) 97.60%),linear-gradient(152.14deg,rgb(0,0,0) 49.11%,rgb(0,44,0) 97.60%),linear-gradient(-27.86deg,rgb(0,0,191) 2.40%,rgb(0,0,255) 50.89%)"></i>
<i style="left:209px;top:268px;width:34px;height:18px;background:rgb(0,0,255);clip-path:polygon(0 0,34.00px 0,34.00px -0.31px,0 17.67px)"></i>
<i style="left:242px;top:268px;width:34px;height:18px;background:linear-gradient(141.62deg,rgb(64,0,0) 39.33%,rgb(255,0,0) 97.50%),linear-gradient(141.59deg,rgb(0,44,0) 39.29%,rgb(0,176,0) 97.49%),linear-gradient(-38.38deg,rgb(0,0,0) 2.50%,rgb(0,0,191) 60.67%)"></i>
<i style="left:242px;top:268px;width:34px;height:18px;background:linear-gradient(133.52deg,rgb(0,0,0) 0.41%,rgb(128,0,0) 65.00%),linear-gradient(133.41deg,rgb(0,0,0) 0.41%,rgb(0,88,0) 65.09%),linear-gradient(-46.48deg,rgb(0,0,128) 35.00%,rgb(0,0,255) 99.59%);clip-path:polygon(0 0,34.00px 0,34.00px -0.31px,0 17.67px)"></i>
<i style="left:275px;top:250px;width:67px;height:36px;background:linear-gradient(-27.86deg,rgb(0,0,0) 1.21%,rgb(255,0,0) 50.06%),linear-gradient(-27.86deg,rgb(0,0,0) 1.21%,rgb(0,176,0) 50.06%),linear-gradient(152.14deg,rgb(0,0,0) 49.94%,rgb(0,0,255) 98.79%)"></i>
<i style="left:275px;top:250px;width:67px;height:36px;background:linear-gradient(152.14deg,rgb(0,0,0) 1.09%,rgb(255,0,0) 49.94%),linear-gradient(152.14deg,rgb(0,0,0) 1.09%,rgb(0,176,0) 49.94%),linear-gradient(-27.86deg,rgb(0,0,0) 50.06%,rgb(0,0,255) 98.91%);clip-path:polygon(0 0,67.00px 0,67.00px 0.25px,0 35.67px)"></i>
<i style="left:341px;top:250px;width:67px;height:36px;background:linear-gradient(152.14deg,rgb(0,0,0) 49.94%,rgb(255,0,0) 98.79%),linear-gradient(152.14deg,rgb(0,0,0) 49.94%,rgb(0,176,0) 98.79%),linear-gradient(-27.86deg,rgb(0,0,0) 1.21%,rgb(0,0,255) 50.06%)"></i>
<i style="left:341px;top:250px;width:67px;height:36px;background:linear-gradient(-27.86deg,rgb(0,0,0) 50.06%,rgb(255,0,0) 98.91%),linear-gradient(-27.86deg,rgb(0,0,0) 50.06%,rgb(0,176,0) 98.91%),linear-gradient(152.14deg,rgb(0,0,0) 1.09%,rgb(0,0,255) 49.94%);clip-path:polygon(0 0,67.00px 0,67.00px 0.25px,0 35.67px)"></i>
<i style="left:407px;top:250px;width:67px;height:36px;background:linear-gradient(-90.00deg,rgb(0,0,0) 1.49%,rgb(255,0,0) 100.00%),linear-gradient(-90.00deg,rgb(0,0,0) 1.49%,rgb(0,176,0) 100.00%),linear-gradient(90.00deg,rgb(0,0,0) -0.00%,rgb(0,0,255) 98.51%)"></i>
<i style="left:407px;top:250px;width:67px;height:36px;background:linear-gradient(180.00deg,rgb(0,0,0) 2.16%,rgb(255,0,0) 99.07%),linear-gradient(180.00deg,rgb(0,0,0) 2.16%,rgb(0,176,0) 99.07%),linear-gradient(0.00deg,rgb(0,0,0) 0.93%,rgb(0,0,255) 97.84%);clip-path:polygon(0 0,67.00px 0,67.00px 0.25px,0 35.67px)"></i>
<i style="left:473px;top:250px;width:67px;height:36px;background:linear-gradient(90.00deg,rgb(0,0,0) -0.00%,rgb(255,0,0) 98.51%),linear-gradient(90.00deg,rgb(0,0,0) 0.00%,rgb(0,176,0) 98.51%),linear-gradient(-90.00deg,rgb(0,0,0) 1.49%,rgb(0,0,255) 100.00%)"></i>
<i style="left:473px;top:250px;width:67px;height:36px;background:linear-gradient(90.00deg,rgb(0,0,0) -0.00%,rgb(255,0,0) 98.51%),linear-gradient(90.00deg,rgb(0,0,0) 0.00%,rgb(0,176,0) 98.51%),linear-gradient(-90.00deg,rgb(0,0,0) 1.49%,rgb(0,0,255) 100.00%);clip-path:polygon(0 0,67.00px 0,67.00px 0.25px,0 35.67px)"></i>
<i style="left:539px;top:250px;width:67px;height:36px;background:linear-gradient(rgb(255,0,0),rgb(255,0,0)),linear-gradient(-90.00deg,rgb(0,0,0) 1.49%,rgb(0,176,0) 100.00%)"></i>
<i style="left:539px;top:250px;width:67px;height:36px;background:linear-gradient(rgb(255,0,0),rgb(255,0,0)),linear-gradient(-90.00deg,rgb(0,0,0) 1.49%,rgb(0,176,0) 100.00%);clip-path:polygon(0 0,67.00px 0,67.00px 0.25px,0 35.67px)"></i>
<i style="left:605px;top:250px;width:66px;height:36px;background:linear-gradient(-27.86deg,rgb(0,0,0) 0.47%,rgb(255,0,0) 49.69%),linear-gradient(0.00deg,rgb(0,0,0) 0.93%,rgb(0,176,0) 97.84%),linear-gradient(152.14deg,rgb(0,0,0) 50.31%,rgb(0,0,255) 99.53%)"></i>
<i style="left:605px;top:250px;width:66px;height:36px;background:linear-gradient(rgb(255,0,0),rgb(255,0,0)),linear-gradient(90.00deg,rgb(0,0,0) 0.00%,rgb(0,176,0) 100.00%);clip-path:polygon(0 0,66.00px 0,66.00px 0.78px,0 35.67px)"></i>
<i style="left:209px;top:285px;width:34px;height:19px;background:linear-gradient(145.80deg,rgb(56,0,0) 43.01%,rgb(92,0,0) 96.27%),linear-gradient(146.27deg,rgb(0,39,0) 43.43%,rgb(0,63,0) 96.27%),linear-gradient(-34.20deg,rgb(0,0,163) 3.73%,rgb(0,0,199) 56.99%)"></i>
<i style="left:209px;top:285px;width:34px;height:19px;background:linear-gradient(148.86deg,rgb(0,0,0) 1.69%,rgb(64,0,0) 52.11%),linear-gradient(149.19deg,rgb(0,0,0) 1.70%,rgb(0,44,0) 51.80%),linear-gradient(-31.14deg,rgb(0,0,191) 47.89%,rgb(0,0,255) 98.31%);clip-path:polygon(0 0,34.00px 0,34.00px 0.14px,0 18.11px)"></i>
<i style="left:242px;top:285px;width:34px;height:19px;background:linear-gradient(8.37deg,rgb(92,0,0) 3.70%,rgb(255,0,0) 96.61%),linear-gradient(8.54deg,rgb(0,63,0) 3.69%,rgb(0,176,0) 96.61%),linear-gradient(-171.63deg,rgb(0,0,0) 3.39%,rgb(0,0,163) 96.30%)"></i>
<i style="left:242px;top:285px;width:34px;height:19px;background:linear-gradient(105.50deg,rgb(64,0,0) 0.47%,rgb(255,0,0) 84.51%),linear-gradient(105.23deg,rgb(0,44,0) 0.46%,rgb(0,176,0) 84.70%),linear-gradient(-74.50deg,rgb(0,0,0) 15.49%,rgb(0,0,191) 99.53%);clip-path:polygon(0 0,34.00px 0,34.00px 0.14px,0 18.11px)"></i>
<i style="left:209px;top:303px;width:34px;height:18px;background:linear-gradient(-7.33deg,rgb(18,0,0) 2.56%,rgb(92,0,0) 80.54%),linear-gradient(-7.45deg,rgb(0,12,0) 2.56%,rgb(0,63,0) 80.27%),linear-gradient(172.67deg,rgb(0,0,163) 19.46%,rgb(0,0,237) 97.44%)"></i>
<i style="left:209px;top:303px;width:34px;height:18px;background:linear-gradient(43.58deg,rgb(36,0,0) 0.88%,rgb(92,0,0) 97.89%),linear-gradient(42.18deg,rgb(0,25,0) 0.91%,rgb(0,63,0) 97.92%),linear-gradient(-136.42deg,rgb(0,0,163) 2.11%,rgb(0,0,219) 99.12%);clip-path:polygon(0 0,34.00px 0,34.00px -0.42px,0 17.56px)"></i>
<i style="left:242px;top:303px;width:34px;height:18px;background:linear-gradient(-4.27deg,rgb(0,0,0) 2.53%,rgb(128,0,0) 87.47%),linear-gradient(-4.29deg,rgb(0,0,0) 2.53%,rgb(0,88,0) 87.40%),linear-gradient(175.73deg,rgb(0,0,128) 12.53%,rgb(0,0,255) 97.47%)"></i>
<i style="left:242px;top:303px;width:34px;height:18px;background:linear-gradient(14.23deg,rgb(18,0,0) 1.67%,rgb(128,0,0) 98.63%),linear-gradient(14.67deg,rgb(0,12,0) 1.65%,rgb(0,88,0) 98.61%),linear-gradient(-165.77deg,rgb(0,0,128) 1.37%,rgb(0,0,237) 98.33%);clip-path:polygon(0 0,34.00px 0,34.00px -0.42px,0 17.56px)"></i>
<i style="left:275px;top:285px;width:67px;height:36px;background:rgb(0,0,255)"></i>
<i style="left:275px;top:285px;width:67px;height:36px;background:linear-gradient(-27.86deg,rgb(0,0,0) 50.21%,rgb(255,0,0) 99.07%),linear-gradient(-27.86deg,rgb(0,0,0) 50.21%,rgb(0,176,0) 99.07%),linear-gradient(152.14deg,rgb(0,0,0) 0.93%,rgb(0,0,255) 49.79%);clip-path:polygon(0 0,67.00px 0,67.00px 0.14px,0 35.56px)"></i>
<i style="left:341px;top:285px;width:67px;height:36px;background:linear-gradient(90.00deg,rgb(0,0,0) 0.00%,rgb(255,0,0) 98.51%),linear-gradient(0.00deg,rgb(0,0,0) 1.23%,rgb(0,176,0) 98.15%),linear-gradient(-90.00deg,rgb(0,0,0) 1.49%,rgb(0,0,255) 100.00%)"></i>
<i style="left:341px;top:285px;width:67px;height:36px;background:linear-gradient(90.00deg,rgb(0,0,0) 0.00%,rgb(255,0,0) 98.51%),linear-gradient(90.00deg,rgb(0,0,0) -0.00%,rgb(0,176,0) 98.51%),linear-gradient(-90.00deg,rgb(0,0,0) 1.49%,rgb(0,0,255) 100.00%);clip-path:polygon(0 0,67.00px 0,67.00px 0.14px,0 35.56px)"></i>
<i style="left:407px;top:285px;width:67px;height:36px;background:linear-gradient(-90.00deg,rgb(0,0,0) 1.49%,rgb(255,0,0) 100.00%),linear-gradient(90.00deg,rgb(0,0,0) -0.00%,rgb(0,0,255) 98.51%)"></i>
<i style="left:407px;top:285px;width:67px;height:36px;background:linear-gradient(-90.00deg,rgb(0,0,0) 1.49%,rgb(255,0,0) 100.00%),linear-gradient(-27.86deg,rgb(0,0,0) 50.21%,rgb(0,176,0) 99.07%),linear-gradient(90.00deg,rgb(0,0,0) -0.00%,rgb(0,0,255) 98.51%);clip-path:polygon(0 0,67.00px 0,67.00px 0.14px,0 35.56px)"></i>
<i style="left:473px;top:285px;width:67px;height:36px;background:linear-gradient(0.00deg,rgb(0,0,0) 1.23%,rgb(255,0,0) 98.15%),linear-gradient(0.00deg,rgb(0,0,0) 1.23%,rgb(0,176,0) 98.15%),linear-gradient(180.00deg,rgb(0,0,0) 1.85%,rgb(0,0,255) 98.77%)"></i>
<i style="left:473px;top:285px;width:67px;height:36px;background:linear-gradient(90.00deg,rgb(0,0,0) -0.00%,rgb(255,0,0) 98.51%),linear-gradient(90.00deg,rgb(0,0,0) 0.00%,rgb(0,176,0) 98.51%),linear-gradient(-90.00deg,rgb(0,0,0) 1.49%,rgb(0,0,255) 100.00%);clip-path:polygon(0 0,67.00px 0,67.00px 0.14px,0 35.56px)"></i>
<i style="left:539px;top:285px;width:67px;height:36px;background:linear-gradient(0.00deg,rgb(0,0,0) 1.23%,rgb(255,0,0) 98.15%),linear-gradient(180.00deg,rgb(0,0,0) 1.85%,rgb(0,0,255) 98.77%)"></i>
<i style="left:539px;top:285px;width:67px;height:36px;background:linear-gradient(0.00deg,rgb(0,0,0) 1.23%,rgb(255,0,0) 98.15%),linear-gradient(-27.86deg,rgb(0,0,0) 50.21%,rgb(0,176,0) 99.07%),linear-gradient(180.00deg,rgb(0,0,0) 1.85%,rgb(0,0,255) 98.77%);clip-path:polygon(0 0,67.00px 0,67.00px 0.14px,0 35.56px)"></i>
<i style="left:605px;top:285px;width:66px;height:36px;background:linear-gradient(152.14deg,rgb(0,0,0) 50.16%,rgb(255,0,0) 99.37%),linear-gradient(-27.86deg,rgb(0,0,0) 0.63%,rgb(0,0,255) 49.84%)"></i>
<i style="left:605px;top:285px;width:66px;height:36px;background:linear-gradient(-27.86deg,rgb(0,0,0) 49.84%,rgb(255,0,0) 99.06%),linear-gradient(152.14deg,rgb(0,0,0) 0.94%,rgb(0,0,255) 50.16%);clip-path:polygon(0 0,66.00px 0,66.00px 0.67px,0 35.56px)"></i>
<i style="left:209px;top:320px;width:67px;height:36px;background:rgb(0,0,255)"></i>
<i style="left:209px;top:320px;width:67px;height:36px;background:linear-gradient(-27.86deg,rgb(0,0,0) 50.37%,rgb(36,0,0) 99.22%),linear-gradient(-27.86deg,rgb(0,0,0) 50.37%,rgb(0,25,0) 99.22%),linear-gradient(152.14deg,rgb(0,0,219) 0.78%,rgb(0,0,255) 49.63%);clip-path:polygon(0 0,67.00px 0,67.00px 0.03px,0 35.44px)"></i>
<i style="left:275px;top:320px;width:67px;height:36px;background:rgb(0,0,255)"></i>
<i style="left:341px;top:320px;width:67px;height:36px;background:linear-gradient(0.00deg,rgb(0,0,0) 1.54%,rgb(255,0,0) 98.46%),linear-gradient(180.00deg,rgb(0,0,0) 1.54%,rgb(0,0,255) 98.46%)"></i>
<i style="left:341px;top:320px;width:67px;height:36px;background:linear-gradient(90.00deg,rgb(0,0,0) -0.00%,rgb(255,0,0) 98.51%),linear-gradient(-90.00deg,rgb(0,0,0) 1.49%,rgb(0,0,255) 100.00%);clip-path:polygon(0 0,67.00px 0,67.00px 0.03px,0 35.44px)"></i>
<i style="left:407px;top:320px;width:67px;height:36px;background:rgb(0,0,255)"></i>
<i style="left:407px;top:320px;width:67px;height:36px;background:linear-gradient(-27.86deg,rgb(0,0,0) 50.37%,rgb(255,0,0) 99.22%),linear-gradient(152.14deg,rgb(0,0,0) 0.78%,rgb(0,0,255) 49.63%);clip-path:polygon(0 0,67.00px 0,67.00px 0.03px,0 35.44px)"></i>
<i style="left:473px;top:320px;width:67px;height:36px;background:rgb(0,0,255)"></i>
<i style="left:539px;top:320px;width:67px;height:36px;background:linear-gradient(152.14deg,rgb(0,0,0) 49.63%,rgb(255,0,0) 98.48%),linear-gradient(-27.86deg,rgb(0,0,0) 1.52%,rgb(0,0,255) 50.37%)"></i>
<i style="left:539px;top:320px;width:67px;height:36px;background:rgb(0,0,255);clip-path:polygon(0 0,67.00px 0,67.00px 0.03px,0 35.44px)"></i>
<i style="left:605px;top:320px;width:66px;height:36px;background:rgb(255,0,0)"></i>
<i style="left:605px;top:320px;width:66px;height:36px;background:linear-gradient(152.14deg,rgb(0,0,0) 0.78%,rgb(255,0,0) 50.00%),linear-gradient(-27.86deg,rgb(0,0,0) 50.00%,rgb(0,0,255) 99.22%);clip-path:polygon(0 0,66.00px 0,66.00px 0.56px,0 35.44px)"></i>
<i style="left:209px;top:355px;width:67px;height:36px;background:rgb(0,0,255)"></i>
<i style="left:275px;top:355px;width:67px;height:36px;background:rgb(0,0,255)"></i>
<i style="left:341px;top:355px;width:67px;height:36px;background:rgb(0,0,255)"></i>
<i style="left:407px;top:355px;width:67px;height:36px;background:rgb(0,0,255)"></i>
<i style="left:473px;top:355px;width:67px;height:36px;background:rgb(0,0,255)"></i>
<i style="left:539px;top:355px;width:67px;height:36px;background:linear-gradient(90.00deg,rgb(0,0,0) -0.00%,rgb(255,0,0) 98.51%),linear-gradient(-90.00deg,rgb(0,0,0) 1.49%,rgb(0,0,255) 100.00%)"></i>
<i style="left:539px;top:355px;width:67px;height:36px;background:linear-gradient(90.00deg,rgb(0,0,0) -0.00%,rgb(255,0,0) 98.51%),linear-gradient(-90.00deg,rgb(0,0,0) 1.49%,rgb(0,0,255) 100.00%);clip-path:polygon(0 0,67.00px 0,67.00px -0.08px,0 35.33px)"></i>
<i style="left:605px;top:355px;width:66px;height:36px;background:rgb(255,0,0)"></i>
<i style="left:209px;top:390px;width:67px;height:36px;background:rgb(0,0,255)"></i>
<i style="left:275px;top:390px;width:67px;height:36px;background:rgb(0,0,255)"></i>
<i style="left:341px;top:390px;width:67px;height:36px;background:linear-gradient(152.14deg,rgb(0,0,0) 49.32%,rgb(255,0,0) 98.17%),linear-gradient(-27.86deg,rgb(0,0,0) 1.83%,rgb(0,0,255) 50.68%)"></i>
<i style="left:341px;top:390px;width:67px;height:36px;background:rgb(0,0,255);clip-path:polygon(0 0,67.00px 0,67.00px -0.20px,0 35.22px)"></i>
<i style="left:407px;top:390px;width:67px;height:36px;background:linear-gradient(180.00deg,rgb(0,0,0) 0.93%,rgb(255,0,0) 97.84%),linear-gradient(0.00deg,rgb(0,0,0) 2.16%,rgb(0,0,255) 99.07%)"></i>
<i style="left:407px;top:390px;width:67px;height:36px;background:linear-gradient(180.00deg,rgb(0,0,0) 0.93%,rgb(255,0,0) 97.84%),linear-gradient(0.00deg,rgb(0,0,0) 2.16%,rgb(0,0,255) 99.07%);clip-path:polygon(0 0,67.00px 0,67.00px -0.20px,0 35.22px)"></i>
<i style="left:473px;top:390px;width:67px;height:36px;background:linear-gradient(-90.00deg,rgb(0,0,0) 1.49%,rgb(255,0,0) 100.00%),linear-gradient(90.00deg,rgb(0,0,0) -0.00%,rgb(0,0,255) 98.51%)"></i>
<i style="left:473px;top:390px;width:67px;height:36px;background:linear-gradient(180.00deg,rgb(0,0,0) 0.93%,rgb(255,0,0) 97.84%),linear-gradient(0.00deg,rgb(0,0,0) 2.16%,rgb(0,0,255) 99.07%);clip-path:polygon(0 0,67.00px 0,67.00px -0.20px,0 35.22px)"></i>
<i style="left:539px;top:390px;width:67px;height:36px;background:linear-gradient(90.00deg,rgb(0,0,0) 0.00%,rgb(255,0,0) 98.51%),linear-gradient(-90.00deg,rgb(0,0,0) 1.49%,rgb(0,0,255) 100.00%)"></i>
<i style="left:539px;top:390px;width:67px;height:36px;background:linear-gradient(90.00deg,rgb(0,0,0) 0.00%,rgb(255,0,0) 98.51%),linear-gradient(-90.00deg,rgb(0,0,0) 1.49%,rgb(0,0,255) 100.00%);clip-path:polygon(0 0,67.00px 0,67.00px -0.20px,0 35.22px)"></i>
<i style="left:605px;top:390px;width:66px;height:36px;background:linear-gradient(rgb(255,0,0),rgb(255,0,0)),linear-gradient(152.14deg,rgb(0,0,0) 49.69%,rgb(0,176,0) 98.90%)"></i>
<i style="left:605px;top:390px;width:66px;height:36px;background:rgb(255,0,0);clip-path:polygon(0 0,66.00px 0,66.00px 0.33px,0 35.22px)"></i>
<i style="left:209px;top:425px;width:67px;height:36px;background:linear-gradient(180.00deg,rgb(0,0,0) 0.62%,rgb(255,0,0) 97.53%),linear-gradient(-90.00deg,rgb(0,0,0) 1.49%,rgb(0,176,0) 100.00%),linear-gradient(0.00deg,rgb(0,0,0) 2.47%,rgb(0,0,255) 99.38%)"></i>
<i style="left:209px;top:425px;width:67px;height:36px;background:linear-gradient(180.00deg,rgb(0,0,0) 0.62%,rgb(255,0,0) 97.53%),linear-gradient(180.00deg,rgb(0,0,0) 0.62%,rgb(0,176,0) 97.53%),linear-gradient(0.00deg,rgb(0,0,0) 2.47%,rgb(0,0,255) 99.38%);clip-path:polygon(0 0,67.00px 0,67.00px -0.31px,0 35.11px)"></i>
<i style="left:275px;top:425px;width:67px;height:36px;background:linear-gradient(180.00deg,rgb(0,0,0) 0.62%,rgb(255,0,0) 97.53%),linear-gradient(0.00deg,rgb(0,0,0) 2.47%,rgb(0,0,255) 99.38%)"></i>
<i style="left:275px;top:425px;width:67px;height:36px;background:linear-gradient(180.00deg,rgb(0,0,0) 0.62%,rgb(255,0,0) 97.53%),linear-gradient(0.00deg,rgb(0,0,0) 2.47%,rgb(0,0,255) 99.38%);clip-path:polygon(0 0,67.00px 0,67.00px -0.31px,0 35.11px)"></i>
<i style="left:341px;top:425px;width:67px;height:36px;background:linear-gradient(-27.86deg,rgb(0,0,0) 1.98%,rgb(255,0,0) 50.84%),linear-gradient(152.14deg,rgb(0,0,0) 49.16%,rgb(0,0,255) 98.02%)"></i>
<i style="left:341px;top:425px;width:67px;height:36px;background:linear-gradient(152.14deg,rgb(0,0,0) 0.31%,rgb(255,0,0) 49.16%),linear-gradient(-27.86deg,rgb(0,0,0) 50.84%,rgb(0,0,255) 99.69%);clip-path:polygon(0 0,67.00px 0,67.00px -0.31px,0 35.11px)"></i>
<i style="left:407px;top:425px;width:67px;height:36px;background:linear-gradient(90.00deg,rgb(0,0,0) -0.00%,rgb(255,0,0) 98.51%),linear-gradient(-90.00deg,rgb(0,0,0) 1.49%,rgb(0,0,255) 100.00%)"></i>
<i style="left:407px;top:425px;width:67px;height:36px;background:linear-gradient(0.00deg,rgb(0,0,0) 2.47%,rgb(255,0,0) 99.38%),linear-gradient(180.00deg,rgb(0,0,0) 0.62%,rgb(0,0,255) 97.53%);clip-path:polygon(0 0,67.00px 0,67.00px -0.31px,0 35.11px)"></i>
<i style="left:473px;top:425px;width:67px;height:36px;background:linear-gradient(180.00deg,rgb(0,0,0) 0.62%,rgb(255,0,0) 97.53%),linear-gradient(152.14deg,rgb(0,0,0) 49.16%,rgb(0,176,0) 98.02%),linear-gradient(0.00deg,rgb(0,0,0) 2.47%,rgb(0,0,255) 99.38%)"></i>
<i style="left:473px;top:425px;width:67px;height:36px;background:linear-gradient(-90.00deg,rgb(0,0,0) 1.49%,rgb(255,0,0) 100.00%),linear-gradient(90.00deg,rgb(0,0,0) -0.00%,rgb(0,0,255) 98.51%);clip-path:polygon(0 0,67.00px 0,67.00px -0.31px,0 35.11px)"></i>
<i style="left:539px;top:425px;width:67px;height:36px;background:linear-gradient(rgb(255,0,0),rgb(255,0,0)),linear-gradient(180.00deg,rgb(0,0,0) 0.62%,rgb(0,176,0) 97.53%)"></i>
<i style="left:539px;top:425px;width:67px;height:36px;background:linear-gradient(152.14deg,rgb(0,0,0) 0.31%,rgb(255,0,0) 49.16%),linear-gradient(180.00deg,rgb(0,0,0) 0.62%,rgb(0,176,0) 97.53%),linear-gradient(-27.86deg,rgb(0,0,0) 50.84%,rgb(0,0,255) 99.69%);clip-path:polygon(0 0,67.00px 0,67.00px -0.31px,0 35.11px)"></i>
<i style="left:605px;top:425px;width:66px;height:36px;background:linear-gradient(rgb(255,0,0),rgb(255,0,0)),linear-gradient(-27.86deg,rgb(0,0,0) 1.25%,rgb(0,176,0) 50.47%)"></i>
<i style="left:605px;top:425px;width:66px;height:36px;background:linear-gradient(rgb(255,0,0),rgb(255,0,0)),linear-gradient(152.14deg,rgb(0,0,0) 0.31%,rgb(0,176,0) 49.53%);clip-path:polygon(0 0,66.00px 0,66.00px 0.22px,0 35.11px)"></i>
<i style="left:209px;top:460px;width:67px;height:35px;background:linear-gradient(0.00deg,rgb(0,0,0) 0.00%,rgb(255,0,0) 99.68%),linear-gradient(180.00deg,rgb(0,0,0) 0.32%,rgb(0,0,255) 100.00%)"></i>
<i style="left:209px;top:460px;width:67px;height:35px;background:linear-gradient(0.00deg,rgb(0,0,0) 0.00%,rgb(255,0,0) 99.68%),linear-gradient(-27.86deg,rgb(0,0,0) 50.30%,rgb(0,176,0) 99.84%),linear-gradient(180.00deg,rgb(0,0,0) 0.32%,rgb(0,0,255) 100.00%);clip-path:polygon(0 0,67.00px 0,67.00px -0.42px,0 35.00px)"></i>
<i style="left:275px;top:460px;width:67px;height:35px;background:linear-gradient(0.00deg,rgb(0,0,0) 0.00%,rgb(255,0,0) 99.68%),linear-gradient(180.00deg,rgb(0,0,0) 0.32%,rgb(0,0,255) 100.00%)"></i>
<i style="left:275px;top:460px;width:67px;height:35px;background:linear-gradient(0.00deg,rgb(0,0,0) 0.00%,rgb(255,0,0) 99.68%),linear-gradient(180.00deg,rgb(0,0,0) 0.32%,rgb(0,0,255) 100.00%);clip-path:polygon(0 0,67.00px 0,67.00px -0.42px,0 35.00px)"></i>
<i style="left:341px;top:460px;width:67px;height:35px;background:rgb(0,0,255)"></i>
<i style="left:341px;top:460px;width:67px;height:35px;background:linear-gradient(-27.86deg,rgb(0,0,0) 50.30%,rgb(255,0,0) 99.84%),linear-gradient(152.14deg,rgb(0,0,0) 0.16%,rgb(0,0,255) 49.70%);clip-path:polygon(0 0,67.00px 0,67.00px -0.42px,0 35.00px)"></i>
<i style="left:407px;top:460px;width:67px;height:35px;background:linear-gradient(0.00deg,rgb(0,0,0) 0.00%,rgb(255,0,0) 99.68%),linear-gradient(180.00deg,rgb(0,0,0) 0.32%,rgb(0,0,255) 100.00%)"></i>
<i style="left:407px;top:460px;width:67px;height:35px;background:linear-gradient(90.00deg,rgb(0,0,0) -0.00%,rgb(255,0,0) 98.51%),linear-gradient(-90.00deg,rgb(0,0,0) 1.49%,rgb(0,0,255) 100.00%);clip-path:polygon(0 0,67.00px 0,67.00px -0.42px,0 35.00px)"></i>
<i style="left:473px;top:460px;width:67px;height:35px;background:linear-gradient(0.00deg,rgb(0,0,0) 0.00%,rgb(255,0,0) 99.68%),linear-gradient(0.00deg,rgb(0,0,0) 0.00%,rgb(0,176,0) 99.68%),linear-gradient(180.00deg,rgb(0,0,0) 0.32%,rgb(0,0,255) 100.00%)"></i>
<i style="left:473px;top:460px;width:67px;height:35px;background:linear-gradient(0.00deg,rgb(0,0,0) 0.00%,rgb(255,0,0) 99.68%),linear-gradient(90.00deg,rgb(0,0,0) 0.00%,rgb(0,176,0) 98.51%),linear-gradient(180.00deg,rgb(0,0,0) 0.32%,rgb(0,0,255) 100.00%);clip-path:polygon(0 0,67.00px 0,67.00px -0.42px,0 35.00px)"></i>
<i style="left:539px;top:460px;width:67px;height:35px;background:linear-gradient(0.00deg,rgb(0,0,0) 0.00%,rgb(255,0,0) 99.68%),linear-gradient(0.00deg,rgb(0,0,0) 0.00%,rgb(0,176,0) 99.68%),linear-gradient(180.00deg,rgb(0,0,0) 0.32%,rgb(0,0,255) 100.00%)"></i>
<i style="left:539px;top:460px;width:67px;height:35px;background:linear-gradient(0.00deg,rgb(0,0,0) 0.00%,rgb(255,0,0) 99.68%),linear-gradient(0.00deg,rgb(0,0,0) 0.00%,rgb(0,176,0) 99.68%),linear-gradient(180.00deg,rgb(0,0,0) 0.32%,rgb(0,0,255) 100.00%);clip-path:polygon(0 0,67.00px 0,67.00px -0.42px,0 35.00px)"></i>
<i style="left:605px;top:460px;width:66px;height:35px;background:linear-gradient(0.00deg,rgb(0,0,0) 0.00%,rgb(255,0,0) 99.68%),linear-gradient(180.00deg,rgb(0,0,0) 0.32%,rgb(0,0,255) 100.00%)"></i>
<i style="left:605px;top:460px;width:66px;height:35px;background:linear-gradient(0.00deg,rgb(0,0,0) 0.00%,rgb(255,0,0) 99.68%),linear-gradient(-27.86deg,rgb(0,0,0) 49.92%,rgb(0,176,0) 99.84%),linear-gradient(180.00deg,rgb(0,0,0) 0.32%,rgb(0,0,255) 100.00%);clip-path:polygon(0 0,66.00px 0,66.00px 0.11px,0 35.00px)"></i>
</div>
<div class="a" style="left:209px;top:181px;width:1px;height:314px;background:rgba(225,90,225,.8)"></div>
<div class="a" style="left:209px;top:494px;width:462px;height:1px;background:rgba(190,30,170,.75)"></div>
<svg style="left:180px;top:495px" width="60" height="20" viewBox="0 0 60 20"><path d="M29.500 2.800L54.300 16.500H4.700z" fill="#fff"/></svg>
<svg style="left:455px;top:305px" width="147" height="161" viewBox="0 0 147 161" shape-rendering="crispEdges"><rect x=".5" y=".5" width="146" height="160" fill="none" stroke="#000" stroke-width="1"/><rect x=".5" y=".5" width="146" height="160" fill="none" stroke="#fff" stroke-width="1" stroke-dasharray="3 3"/></svg>

<!-- ===== outer taskbar ===== -->
<div class="a" style="left:0;top:572px;width:800px;height:28px;background:#d4d0c8"></div><div class="a" style="left:0;top:573px;width:800px;height:1px;background:#fff"></div>
<div class="tk" style="left:2px;top:576px;width:52px;height:22px"></div>
<svg style="left:3.500px;top:578px" width="16" height="15.500" viewBox="0 0 16 16"><path d="M1.500 3.500q3-1.800 5.800-.3l-1 4.600q-2.800-1.500-5.800.3z" fill="#e5492c"/><path d="M8.300 3.400q3 1.600 5.900-.2l-1 4.600q-2.900 1.800-5.900.2z" fill="#6fb53a"/><path d="M.9 9.200q3-1.800 5.800-.3l-1 4.600q-2.800-1.500-5.800.3z" fill="#3f74d8"/><path d="M7.300 9.100q3 1.600 5.900-.2l-1 4.600q-2.900 1.800-5.900.2z" fill="#f1c22e"/></svg>
<span class="tb" style="left:21.500px;top:580.600px;font-size:11px">Start</span>
<i class="sep" style="left:61px;top:578px;height:18px"></i>
<div class="tk" style="left:68px;top:576px;width:160px;height:22px"></div>
<svg style="left:72px;top:581px" width="17" height="14" viewBox="0 0 17 14"><path d="M1.500 8.500L9 2.500l6.500 2.500L8 11z" fill="#c8c8c8" stroke="#2a2a2a" stroke-width="1.100"/><path d="M2 10.500v2M4 11.300v2M6 12v2M9.500 11.500v2M12 9.500v2M14.500 7.500v2" stroke="#222" stroke-width="1"/></svg>
<span class="t" style="left:91.500px;top:580.600px">GS2 Downloader v2.3.1</span>
<div class="tk" style="left:231px;top:576px;width:160px;height:22px"></div>
<svg style="left:235.500px;top:578.500px" width="15" height="17" viewBox="0 0 13 14"><path d="M6.500.8l5.300 2.400v7L6.500 13.200 1.200 10.200v-7z" fill="#222" stroke="#111" stroke-width="1"/><path d="M1.700 4L6.300 6.300v6.300L1.700 9.900z" fill="#d22a1e"/><path d="M11.300 4L6.700 6.300v6.300l4.600-2.700z" fill="#2f9a3a"/><path d="M6.500 1.500l4.500 2.100-4.500 2.200-4.500-2.200z" fill="#3b55c8"/><path d="M3.300 6.800l1.600 3.200M8.600 7.800l1.200 2" stroke="#111" stroke-width="1.100"/></svg>
<span class="t" style="left:254.500px;top:580.600px">GeoSurveyor</span>
<div class="tk tkp" style="left:394px;top:576px;width:160px;height:22px"></div>
<svg style="left:399px;top:580px" width="16" height="16" viewBox="0 0 16 16"><use href="#eye"/></svg>
<span class="tb" style="left:419px;top:580.600px;font-size:11px">untitled - ACDSee 6.0</span>
<div class="tray" style="left:682px;top:576px;width:116px;height:22px"></div>
<svg style="left:684px;top:577px" width="74" height="20" viewBox="0 0 74 20"><g id="trayic"><path d="M4.500 2.200q4-2 7.500-.2 4 2.300 2.800 6.500 2.500 3.500.2 6.800-2.800 3-7.200 1.500-3.800.8-5.800-2.200-1.700-3.200.3-6-1.300-4.200 2.200-6.400z" fill="#fafff0" stroke="#86cc24" stroke-width="1.800"/><path d="M20 18v-3.500h2.700v3.500zM23.700 18v-6.500h2.700v6.500zM27.400 18v-10h2.700v10zM31.100 18v-14h2.700v14z" fill="#2fe01c" stroke="#0b6a08" stroke-width=".7"/><path d="M19.500 18.500h15" stroke="#084a06" stroke-width="1"/><rect x="38" y="5" width="8.500" height="7" fill="#3b57a8" stroke="#1d2c6a" stroke-width=".9"/><path d="M39.300 13.500h6l1.300 2.300h-8.600z" fill="#7f8fc8" stroke="#39488a" stroke-width=".7"/><path d="M48.500 4.500q1.400 2 0 4.500M50.500 3.300q2.200 3.200 0 7" fill="none" stroke="#555" stroke-width=".8"/><circle cx="62" cy="9.500" r="6" fill="#a2a2a2" stroke="#4a4a4a" stroke-width="1.200"/><circle cx="61.500" cy="9.300" r="2.800" fill="#6a6a6a" stroke="#333" stroke-width=".7"/><path d="M66.500 15q3-2.500 2-6.500M64.500 17q5.500-2 5.500-8" fill="none" stroke="#8c9ad8" stroke-width="1"/></g></svg>
<span class="t" style="left:762px;top:580.600px">17:13</span>

</div>
</body></html>
